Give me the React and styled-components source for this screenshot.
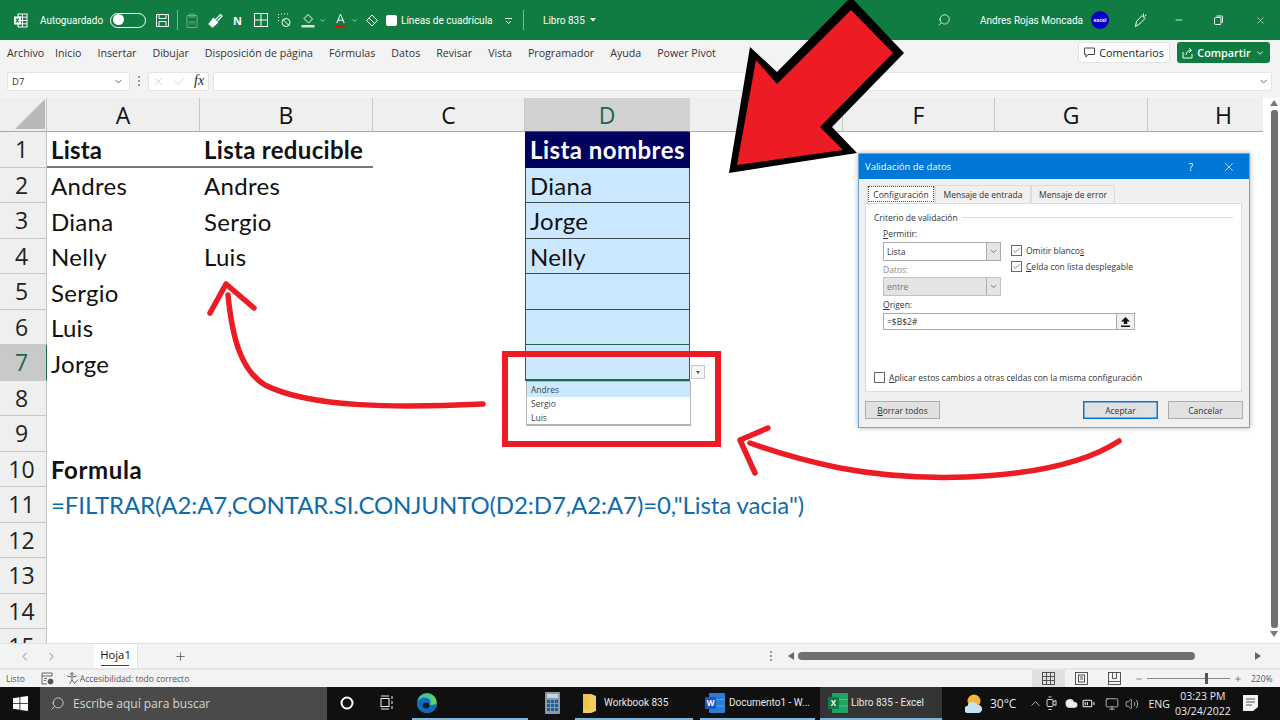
import React from "react";
import styled, { createGlobalStyle } from "styled-components";
import {
  ChevronDown,
  ChevronUp,
  ChevronLeft,
  ChevronRight,
  Cloud,
  BatteryMedium,
  Monitor,
  Volume2,
  Search,
  Plus,
  X,
  Check,
  Minus,
} from "lucide-react";

const GlobalStyle = createGlobalStyle`
  html, body { margin: 0; padding: 0; background: #fff; }
  body { width: 1280px; height: 720px; overflow: hidden; font-family: "Open Sans", "Liberation Sans", sans-serif; }
  * { box-sizing: border-box; }
`;

const Page = styled.div`
  position: relative;
  width: 1280px;
  height: 720px;
  display: flex;
  flex-direction: column;
  overflow: hidden;
`;

/* title bar */
const TitleBar = styled.div`
  height: 40px;
  background: #107c41;
  color: #fff;
  display: flex;
  align-items: center;
  padding: 0 14px 0 13px;
  flex: none;
`;

const Slot = styled.span`
  display: flex;
  align-items: center;
  justify-content: ${(p) => (p.$start ? "flex-start" : "center")};
  flex: none;
  margin-left: ${(p) => p.$ml || 0}px;
  width: ${(p) => (p.$w ? `${p.$w}px` : "auto")};
  font-size: ${(p) => (p.$fs ? `${p.$fs}px` : "inherit")};
`;

const TitleText = styled.span`
  flex: none;
  font-family: "Roboto", "Open Sans", sans-serif;
  font-size: 10px;
  white-space: nowrap;
  margin-left: ${(p) => p.$ml || 0}px;
  width: ${(p) => p.$w}px;
`;

const Toggle = styled.span`
  flex: none;
  width: 36px;
  height: 15px;
  margin-left: 6px;
  border: 1.5px solid #fff;
  border-radius: 8px;
  position: relative;
  &::after {
    content: "";
    position: absolute;
    left: 2px;
    top: 0.5px;
    width: 11px;
    height: 11px;
    border-radius: 50%;
    background: #fff;
  }
`;

const TitleSep = styled.span`
  flex: none;
  width: 1px;
  height: 20px;
  background: #7db896;
  margin-left: ${(p) => p.$ml}px;
`;

const WhiteCheck = styled.span`
  flex: none;
  width: 11px;
  height: 11px;
  margin-left: 8px;
  border-radius: 2px;
  background: #fff;
`;

const NLetter = styled.span`
  flex: none;
  width: 9px;
  margin-left: 10px;
  font-size: 11px;
  font-weight: 700;
`;

const Avatar = styled.span`
  flex: none;
  width: 18px;
  height: 18px;
  margin-left: 10px;
  border-radius: 50%;
  background: #0000c8;
  color: #fff;
  font-size: 5px;
  font-weight: 700;
  display: flex;
  align-items: center;
  justify-content: center;
`;

const Spacer = styled.span`
  flex: 1;
`;

/* menu row */
const MenuRow = styled.div`
  height: 25px;
  flex: none;
  background: #f3f3f3;
  display: flex;
  align-items: center;
  padding: 0 10px 0 7px;
  gap: 16px;
`;

const MenuItem = styled.span`
  font-size: 10.65px;
  color: #333;
  white-space: nowrap;
  &:first-child {
    margin-right: -5px;
  }
`;

const CommentButton = styled.span`
  width: 92px;
  height: 21px;
  background: #fff;
  border: 1px solid #e2e2e2;
  border-radius: 3px;
  display: flex;
  align-items: center;
  justify-content: center;
  gap: 4px;
  font-size: 10.8px;
  color: #222;
  margin-left: auto;
`;

const ShareButton = styled.span`
  width: 93px;
  height: 21px;
  margin-left: -9px;
  background: #107c41;
  color: #fff;
  border-radius: 3px;
  display: flex;
  align-items: center;
  justify-content: center;
  gap: 4px;
  font-size: 10.8px;
  font-weight: 600;
`;

/* formula row */
const FormulaRow = styled.div`
  height: 33px;
  flex: none;
  background: #f3f3f3;
  display: flex;
  align-items: center;
  padding: 0 8px 1px 7px;
`;

const NameBox = styled.div`
  width: 123px;
  height: 19px;
  background: #fff;
  border: 1px solid #e4e4e4;
  border-radius: 2px;
  display: flex;
  align-items: center;
  justify-content: space-between;
  padding: 0 5px 0 4px;
  font-size: 9.5px;
  color: #333;
`;

const GripDots = styled.span`
  width: 2px;
  height: 10px;
  margin: 0 8px 0 8px;
  background: repeating-linear-gradient(#999 0 2px, transparent 2px 4px);
  flex: none;
`;

const FormulaButtons = styled.div`
  width: 61px;
  height: 19px;
  background: #fff;
  border: 1px solid #e4e4e4;
  border-radius: 2px;
  display: flex;
  align-items: center;
  gap: 8px;
  padding-left: 3px;
  flex: none;
`;

const FxLabel = styled.span`
  font-family: "Liberation Serif", serif;
  font-style: italic;
  font-size: 14px;
  color: #222;
`;

const FormulaInput = styled.div`
  flex: 1;
  height: 19px;
  margin-left: 4px;
  background: #fff;
  border: 1px solid #e4e4e4;
  border-radius: 2px;
  display: flex;
  align-items: center;
  justify-content: flex-end;
  padding-right: 2px;
`;

/* sheet */
const SheetArea = styled.div`
  height: 545px;
  flex: none;
  display: flex;
  background: #fff;
`;

const SheetGrid = styled.div`
  width: 1263px;
  overflow: hidden;
  display: grid;
  grid-template-columns: 47px 153px 173px 152px 165px 153px 152px 153px 152px;
  grid-template-rows: 34px repeat(15, 35.5px);
`;

const Corner = styled.div`
  background: #efefef;
  border-right: 1px solid #c4c4c4;
  border-bottom: 1px solid #a8a8a8;
  display: flex;
  align-items: flex-end;
  justify-content: flex-end;
  padding: 0 1px 2px 0;
`;

const ColHead = styled.div`
  background: ${(p) => (p.$on ? "#d2d2d2" : "#efefef")};
  color: ${(p) => (p.$on ? "#1d6b45" : "#111")};
  border-right: 1px solid ${(p) => (p.$on ? "#d2d2d2" : "#c8c8c8")};
  border-bottom: 1px solid ${(p) => (p.$on ? "#1d6b45" : "#a8a8a8")};
  font-size: 23px;
  display: flex;
  align-items: center;
  justify-content: center;
`;

const RowHead = styled.div`
  background: ${(p) => (p.$on ? "#c9c9c9" : "#efefef")};
  color: ${(p) => (p.$on ? "#1d6b45" : "#222")};
  border-right: ${(p) => (p.$on ? "1px solid #1d6b45" : "1px solid #c4c4c4")};
  border-bottom: 1px solid #c8c8c8;
  font-size: 23px;
  display: flex;
  align-items: center;
  justify-content: center;
  padding-right: 3px;
`;

const Cell = styled.div`
  font-family: "Lato", "Carlito", "Liberation Sans", sans-serif;
  font-size: 24px;
  color: #111;
  padding: 1px 0 0 4px;
  white-space: nowrap;
  display: flex;
  align-items: center;
  font-weight: ${(p) => (p.$bold ? 700 : 400)};
  letter-spacing: ${(p) => p.$ls ?? (p.$bold ? 0.3 : 0.3)}px;
  ${(p) => p.$rule && "border-bottom: 2px solid #777;"}
`;

const FormulaCell = styled(Cell)`
  color: #0f6cab;
  padding-top: 0;
  letter-spacing: -0.1px;
`;

const NamesHead = styled(Cell)`
  background: #00005f;
  color: #fff;
  font-weight: 700;
  padding: 0 0 0 5px;
  letter-spacing: 0.45px;
`;

const NameCell = styled(Cell)`
  background: #cce8ff;
  padding-left: 4px;
  border-left: 1px solid #3c4a52;
  border-right: 1px solid #3c4a52;
  border-bottom: 1px solid #3c4a52;
  ${(p) =>
    p.$selected &&
    "border: 1px solid #1d6b45; border-bottom: 2px solid #1d6b45; margin-top: -1px; position: relative;"}
`;

const VScroll = styled.div`
  width: 17px;
  background: #fff;
  display: flex;
  flex-direction: column;
  align-items: center;
  padding: 2px 0 0 5px;
`;

const VThumb = styled.div`
  width: 7px;
  height: 518px;
  margin: 4px 0 3px;
  background: #707070;
  border-radius: 3px;
`;

const Arrowhead = styled.span`
  width: 0;
  height: 0;
  border-left: 4px solid transparent;
  border-right: 4px solid transparent;
  ${(p) => (p.$down ? "border-top: 6px solid #777;" : "border-bottom: 6px solid #777;")}
`;

/* sheet tabs */
const TabsRow = styled.div`
  height: 25px;
  flex: none;
  background: #f3f3f3;
  border-top: 1px solid #e0e0e0;
  display: flex;
  align-items: center;
  padding-left: 18px;
`;

const SheetTab = styled.div`
  width: 44px;
  height: 100%;
  margin-left: 36px;
  background: #fff;
  border-right: 1px solid #e0e0e0;
  display: flex;
  align-items: center;
  justify-content: center;
  font-size: 11.3px;
  color: #111;
  position: relative;
  padding-bottom: 3px;
  &::after {
    content: "";
    position: absolute;
    left: 7px;
    right: 8px;
    bottom: 2px;
    height: 1.5px;
    background: #185c37;
  }
`;

const HScrollTrack = styled.div`
  margin-left: auto;
  display: flex;
  align-items: center;
  padding-right: 19px;
`;

const HThumb = styled.div`
  width: 397px;
  height: 8px;
  margin: 0 60px 0 4px;
  background: #707070;
  border-radius: 4px;
`;

const HArrow = styled.span`
  width: 0;
  height: 0;
  border-top: 4px solid transparent;
  border-bottom: 4px solid transparent;
  ${(p) => (p.$right ? "border-left: 6px solid #666;" : "border-right: 6px solid #666;")}
`;

/* status bar */
const StatusBar = styled.div`
  height: 19px;
  flex: none;
  background: #f3f3f3;
  border-top: 2px solid #e6e6e6;
  display: flex;
  align-items: center;
  padding-left: 6px;
  font-size: 8.5px;
  color: #555;
`;

const ViewButton = styled.span`
  width: 33px;
  height: 100%;
  display: flex;
  align-items: center;
  justify-content: center;
  background: ${(p) => (p.$on ? "#e0e0e0" : "transparent")};
`;

const ZoomTrack = styled.span`
  width: 83px;
  height: 1px;
  margin: 0 4px 0 4px;
  background: #888;
  position: relative;
`;

const ZoomThumb = styled.span`
  position: absolute;
  left: 58px;
  top: -5px;
  width: 3px;
  height: 11px;
  background: #555;
`;

/* task bar */
const TaskBar = styled.div`
  height: 33px;
  flex: none;
  background: #101010;
  color: #e8e8e8;
  display: flex;
  align-items: stretch;
`;

const StartBox = styled.div`
  width: 40px;
  flex: none;
  display: flex;
  align-items: center;
  justify-content: center;
`;

const SearchBox = styled.div`
  width: 287px;
  flex: none;
  background: #4a4a4a;
  display: flex;
  align-items: center;
  gap: 8px;
  padding-left: 10px;
  font-size: 12px;
  color: #d6d6d6;
`;

const TaskItem = styled.div`
  width: ${(p) => p.$w}px;
  margin-left: ${(p) => p.$ml || 0}px;
  padding-left: ${(p) => p.$pl || 0}px;
  display: flex;
  align-items: center;
  justify-content: ${(p) => (p.$center ? "center" : "flex-start")};
  gap: ${(p) => p.$gap || 0}px;
  flex: none;
  font-family: "Roboto", "Open Sans", sans-serif;
  font-size: 10px;
  white-space: nowrap;
  background: ${(p) => (p.$active ? "#343434" : "transparent")};
  border-bottom: 2px solid ${(p) => (p.$open ? "#7fb4dd" : "transparent")};
`;

const Tray = styled.div`
  display: flex;
  align-items: center;
  flex: none;
  margin-left: 23px;
  font-size: 10.5px;
`;

const Clock = styled.div`
  width: 66px;
  text-align: center;
  font-size: 10.5px;
  line-height: 15px;
`;

/* dialog */
const DialogWin = styled.div`
  position: absolute;
  left: 858px;
  top: 153px;
  width: 392px;
  height: 275px;
  background: #f0f0f0;
  border: 1px solid #6fa6d6;
  box-shadow: 0 0 5px rgba(0, 0, 0, 0.3);
  color: #333;
  font-size: 8.5px;
  display: flex;
  flex-direction: column;
`;

const DialogTitle = styled.div`
  height: 25px;
  background: #0078d7;
  color: #fff;
  font-size: 9.5px;
  display: flex;
  align-items: center;
  padding: 0 13px 0 6px;
  flex: none;
`;

const DialogHelp = styled.span`
  margin-left: auto;
  margin-right: 29px;
  font-size: 10px;
`;

const DialogTabs = styled.div`
  display: flex;
  height: 18px;
  margin: 6px 0 0 8px;
  flex: none;
`;

const DialogTab = styled.div`
  width: ${(p) => p.$w}px;
  background: ${(p) => (p.$on ? "#fff" : "#f0f0f0")};
  border: 1px solid #dcdcdc;
  border-bottom: none;
  display: flex;
  align-items: center;
  justify-content: center;
  ${(p) => p.$on && "outline: 1px dotted #555; outline-offset: -2px;"}
`;

const DialogPanel = styled.div`
  height: 189px;
  margin: 0 7px 0 6px;
  background: #fff;
  border: 1px solid #dcdcdc;
  padding: 7px 8px 0 8px;
  flex: none;
`;

const Legend = styled.div`
  display: flex;
  align-items: center;
  gap: 4px;
  height: 12px;
  &::after {
    content: "";
    flex: 1;
    height: 1px;
    background: #dcdcdc;
  }
`;

const FieldsRow = styled.div`
  display: flex;
  margin-left: 9px;
`;

const FieldColumn = styled.div`
  width: 118px;
  flex: none;
`;

const ChecksColumn = styled.div`
  margin: 22px 0 0 10px;
  display: flex;
  flex-direction: column;
  gap: 5px;
`;

const FieldLabel = styled.div`
  height: 12px;
  line-height: 12px;
  margin-top: ${(p) => p.$mt}px;
  margin-left: ${(p) => p.$ml || 0}px;
  color: ${(p) => (p.$off ? "#8a8a8a" : "#333")};
`;

const SelectBox = styled.div`
  height: 19px;
  margin-top: ${(p) => p.$mt}px;
  background: ${(p) => (p.$off ? "#e4e4e4" : "#fff")};
  color: ${(p) => (p.$off ? "#777" : "#333")};
  border: 1px solid ${(p) => (p.$off ? "#c2c2c2" : "#ababab")};
  display: flex;
  align-items: center;
  justify-content: space-between;
  padding-left: 3px;
`;

const SelectArrow = styled.span`
  width: 14px;
  height: 100%;
  background: #e4e4e4;
  border-left: 1px solid #ababab;
  display: flex;
  align-items: center;
  justify-content: center;
`;

const CheckLine = styled.label`
  display: flex;
  align-items: center;
  gap: 4px;
  height: 11px;
`;

const CheckBox = styled.span`
  width: 11px;
  height: 11px;
  flex: none;
  background: #fff;
  border: 1px solid #666;
  display: flex;
  align-items: center;
  justify-content: center;
`;

const SourceInput = styled.div`
  width: 252px;
  height: 17px;
  margin: 2px 0 0 9px;
  border: 1px solid #ababab;
  display: flex;
  align-items: center;
  justify-content: space-between;
  padding-left: 3px;
`;

const SourceButton = styled.span`
  width: 18px;
  height: 100%;
  background: #f0f0f0;
  border-left: 1px solid #ababab;
  display: flex;
  align-items: center;
  justify-content: center;
`;

const ApplyLine = styled(CheckLine)`
  margin-top: 42px;
`;

const DialogFooter = styled.div`
  display: flex;
  margin: 9px 6px 0 6px;
  gap: 10px;
`;

const DialogButton = styled.div`
  width: 75px;
  height: 18px;
  background: #e1e1e1;
  border: 1px solid ${(p) => (p.$main ? "#0078d7" : "#adadad")};
  ${(p) => p.$main && "box-shadow: inset 0 0 0 0.5px #0078d7;"}
  ${(p) => p.$push && "margin-left: auto;"}
  display: flex;
  align-items: center;
  justify-content: center;
`;

/* validation list */
const DropButton = styled.div`
  position: absolute;
  left: 691px;
  top: 365px;
  width: 14px;
  height: 14px;
  background: #f4f4f4;
  border: 1px solid #c8c8c8;
  display: flex;
  align-items: center;
  justify-content: center;
  &::after {
    content: "";
    border-left: 2.5px solid transparent;
    border-right: 2.5px solid transparent;
    border-top: 3px solid #555;
  }
`;

const DropList = styled.div`
  position: absolute;
  left: 526px;
  top: 381px;
  width: 165px;
  height: 45px;
  background: #fff;
  border: 1px solid #b5b5b5;
  border-bottom-width: 2px;
`;

const DropItem = styled.div`
  height: ${(p) => (p.$on ? 15 : 14)}px;
  line-height: ${(p) => (p.$on ? 16 : 14)}px;
  padding-left: 4px;
  font-size: 8.5px;
  color: #444;
  background: ${(p) => (p.$on ? "#cce8ff" : "transparent")};
`;

const RedFrame = styled.div`
  position: absolute;
  left: 502px;
  top: 351px;
  width: 219px;
  height: 96px;
  border: 6px solid #ed1c24;
`;

const OverlayArt = styled.svg`
  position: absolute;
  left: 0;
  top: 0;
  width: 1280px;
  height: 720px;
  pointer-events: none;
`;

/* drawn icons */
const ExcelLogo = () => (
  <svg width="15" height="15" viewBox="0 0 15 15" fill="none" stroke="#fff" strokeWidth="1">
    <rect x="5" y="1" width="9" height="13" />
    <path d="M5 4.2h9M5 7.5h9M5 10.8h9M9.5 1v13" />
    <rect x="1" y="3.5" width="7" height="8" fill="#fff" stroke="none" />
    <path d="M2.8 5.4l3.2 4.2M6 5.4L2.8 9.6" stroke="#107c41" strokeWidth="1.1" />
  </svg>
);

const SaveIcon = () => (
  <svg width="15" height="15" viewBox="0 0 15 15" fill="none" stroke="#fff" strokeWidth="1">
    <path d="M1.5 1.5h12v12h-12z" />
    <path d="M4 1.5v4h7v-4M4 13.5v-5h7v5" />
  </svg>
);

const ClipboardIcon = () => (
  <svg width="12" height="15" viewBox="0 0 12 15" fill="none" stroke="#6fae8c" strokeWidth="1">
    <path d="M1 2.5h10v12H1zM3.5 1h5v3h-5z" />
    <path d="M3 11h1M5.5 11h1M8 11h1M3 9h6" />
  </svg>
);

const BrushIcon = () => (
  <svg width="15" height="15" viewBox="0 0 15 15" fill="none" stroke="#fff" strokeWidth="1.2">
    <path d="M1 11l4.5-5.5 4 4L4.5 14z" fill="#fff" />
    <path d="M7.5 6.5l5-5 1.5 1.5-4.5 5" />
  </svg>
);

const BordersIcon = () => (
  <svg width="14" height="14" viewBox="0 0 14 14" fill="none" stroke="#fff" strokeWidth="1">
    <rect x="0.5" y="0.5" width="13" height="13" />
    <path d="M7 .5v13M.5 7h13" />
  </svg>
);

const NoBorderIcon = () => (
  <svg width="13" height="15" viewBox="0 0 13 15" fill="none" stroke="#fff" strokeWidth="1">
    <path d="M.5 1v9" strokeDasharray="1 2" />
    <path d="M3 1h8" strokeDasharray="1 2" />
    <circle cx="8" cy="9.5" r="4" />
    <path d="M5.2 6.7l5.6 5.6" />
  </svg>
);

const FillIcon = () => (
  <svg width="14" height="15" viewBox="0 0 14 15" fill="none" stroke="#fff" strokeWidth="1">
    <path d="M7 1.5l4.5 4.5-4 4-4.500-4.500z" />
    <rect x="0.5" y="12" width="13" height="2.5" fill="#cfe8d8" stroke="none" />
  </svg>
);

const EraserIcon = () => (
  <svg width="12" height="13" viewBox="0 0 12 13" fill="none" stroke="#fff" strokeWidth="1">
    <path d="M6 1l5.3 5.5L6 12 .7 6.5z" />
    <path d="M3 4l5.5 5.5" />
  </svg>
);

const FontColorIcon = () => (
  <svg width="11" height="15" viewBox="0 0 11 15" fill="none">
    <path d="M1.8 10L5.5 1l3.700 9M3 7.200h5" stroke="#fff" strokeWidth="1" />
    <rect x="0" y="12" width="11" height="2.5" fill="#e01010" />
  </svg>
);

const PenIcon = () => (
  <svg width="14" height="16" viewBox="0 0 14 16" fill="none" stroke="#fff" strokeWidth="1">
    <path d="M1.5 14.5l1-5L8 3.5l3 3-5.500 5.500z" />
    <path d="M9.5 1.5v3M12.5 2.5l-2 2" />
  </svg>
);

const RestoreIcon = () => (
  <svg width="9" height="10" viewBox="0 0 9 10" fill="none" stroke="#fff" strokeWidth="1">
    <rect x="0.5" y="2.5" width="6.5" height="7" rx="1" />
    <path d="M2.5 1h5.2a.8.8 0 0 1 .8.8V7.5" />
  </svg>
);

const Caret = () => (
  <svg width="6" height="4" viewBox="0 0 6 4">
    <path d="M0 0h6L3 3.5z" fill="#fff" />
  </svg>
);

const QatMore = () => (
  <svg width="7" height="7" viewBox="0 0 7 7" fill="none" stroke="#fff">
    <path d="M0 1.5h7" />
    <path d="M1 4l2.5 2.5L6 4" />
  </svg>
);

const CommentIcon = () => (
  <svg width="11" height="11" viewBox="0 0 11 11" fill="none" stroke="#333" strokeWidth="0.9">
    <path d="M.5 1h10v6.5H4L2 10V7.5H.5z" />
  </svg>
);

const ShareIcon = () => (
  <svg width="11" height="12" viewBox="0 0 11 12" fill="none" stroke="#fff" strokeWidth="1">
    <path d="M1 5v6h9V7M4 8c0-3 2-4.500 5-4.500M7 1l2.500 2.500L7 6" />
  </svg>
);

const CornerTriangle = () => (
  <svg width="30" height="30" viewBox="0 0 30 30">
    <path d="M30 0v30H0z" fill="#b8b8b8" />
  </svg>
);

const MacroIcon = () => (
  <svg width="13" height="13" viewBox="0 0 13 13" fill="none" stroke="#555" strokeWidth="0.9">
    <path d="M1 1h10v3H1zM1 4v8h5M3 6.500h3M3 8.500h2" />
    <circle cx="9.500" cy="9.500" r="2.500" fill="#555" />
  </svg>
);

const AccessIcon = () => (
  <svg width="13" height="13" viewBox="0 0 13 13" fill="none" stroke="#555" strokeWidth="0.9">
    <circle cx="6" cy="2" r="1.300" />
    <path d="M1 4l5 1 5-1M6 5v3L3.500 12M6 8l1.500 2 1 1.500 3.500-4" />
  </svg>
);

const GridViewIcon = () => (
  <svg width="13" height="13" viewBox="0 0 13 13" fill="none" stroke="#444" strokeWidth="0.9">
    <rect x="0.500" y="0.500" width="12" height="12" />
    <path d="M4.500.5v12M8.500.5v12M.5 4.500h12M.5 8.500h12" />
  </svg>
);

const PageViewIcon = () => (
  <svg width="13" height="13" viewBox="0 0 13 13" fill="none" stroke="#444" strokeWidth="0.9">
    <rect x="0.500" y="0.500" width="12" height="12" />
    <rect x="3.500" y="3" width="6" height="7" />
    <path d="M5 5h3M5 7h3" />
  </svg>
);

const BreakViewIcon = () => (
  <svg width="13" height="13" viewBox="0 0 13 13" fill="none" stroke="#444" strokeWidth="0.9">
    <rect x="0.500" y="0.500" width="12" height="12" />
    <path d="M4.500.5v6h4v-6M.5 9.500h12" />
  </svg>
);

const WindowsLogo = () => (
  <svg width="15" height="15" viewBox="0 0 15 15" fill="#fff">
    <path d="M0 2.200L6.500 1.200V7H0zM7.300 1.100L15 0v7H7.300zM0 7.800h6.500v6L0 12.800zM7.300 7.800H15V15l-7.700-1.100z" />
  </svg>
);

const TaskViewIcon = () => (
  <svg width="14" height="15" viewBox="0 0 14 15" fill="none" stroke="#eee" strokeWidth="1">
    <rect x="1" y="3.500" width="8" height="8" />
    <path d="M1 1h8M1 14h8M12 1v3M12 6v3M12 11v3" />
  </svg>
);

const CortanaRing = () => (
  <svg width="14" height="14" viewBox="0 0 14 14" fill="none" stroke="#fff" strokeWidth="2">
    <circle cx="7" cy="7" r="5.500" />
  </svg>
);

const EdgeLogo = () => (
  <svg width="20" height="20" viewBox="0 0 20 20">
    <defs>
      <linearGradient id="edgeA" x1="0" y1="0" x2="1" y2="1">
        <stop offset="0" stopColor="#35c1a0" />
        <stop offset="1" stopColor="#76d65a" />
      </linearGradient>
    </defs>
    <circle cx="10" cy="10" r="10" fill="url(#edgeA)" />
    <path d="M0 10c1-4 6-6 10-5 4 1 5 5 2 6.500 3 1 6 .5 8-1.500 0 6-5 10-10 10S0 16 0 10z" fill="#0f6cc4" />
    <ellipse cx="9" cy="12.500" rx="3.500" ry="3" fill="#101010" opacity="0.85" />
  </svg>
);

const CalcIcon = () => (
  <svg width="15" height="22" viewBox="0 0 15 22">
    <rect width="15" height="22" rx="1" fill="#8a9ba8" />
    <rect x="2" y="2" width="11" height="4" fill="#c9d6df" />
    <path d="M2 8h3v3H2zM6 8h3v3H6zM10 8h3v3h-3zM2 12h3v3H2zM6 12h3v3H6zM10 12h3v3h-3zM2 16h3v3H2zM6 16h3v3H6zM10 16h3v3h-3z" fill="#1f5d9c" />
  </svg>
);

const FolderIcon = () => (
  <svg width="13" height="20" viewBox="0 0 13 20">
    <path d="M0 1h8l5 2v15l-5 2H0z" fill="#f3cf62" />
    <path d="M0 1h6v15H0z" fill="#e6b73c" opacity="0.5" />
  </svg>
);

const OfficeTile = ({ back, front, letter }) => (
  <svg width="20" height="20" viewBox="0 0 20 20">
    <rect x="4" y="0" width="16" height="20" rx="1" fill={back} />
    <path d="M4 6.500h16M4 13h16" stroke="#ffffff" strokeOpacity="0.25" />
    <rect x="0" y="4" width="11" height="12" rx="1" fill={front} />
    <text x="5.500" y="13" textAnchor="middle" fontSize="8" fontWeight="700" fill="#fff" fontFamily="Open Sans, sans-serif">
      {letter}
    </text>
  </svg>
);

const WeatherIcon = () => (
  <svg width="18" height="20" viewBox="0 0 18 20">
    <circle cx="9" cy="7" r="6.500" fill="#f4b63c" />
    <path d="M3 19a3.500 3.500 0 0 1-.5-7 5 5 0 0 1 9.500-1 4 4 0 0 1 2 8z" fill="#c6e2f5" />
  </svg>
);

const MeetIcon = () => (
  <svg width="11" height="15" viewBox="0 0 11 15" fill="none" stroke="#eee" strokeWidth="0.9">
    <rect x="1" y="3.500" width="6" height="7" rx="1" />
    <path d="M7 6l3-1.500v5L7 8M2.500 1h3M2.500 13.500h3" />
  </svg>
);

const NotifyIcon = () => (
  <svg width="16" height="17" viewBox="0 0 16 17">
    <path d="M0 0h15v12l-5 4H0z" fill="#f2f2f2" />
    <path d="M3 4h9M3 7h9M3 10h6" stroke="#555" />
  </svg>
);

const UploadMark = () => (
  <svg width="9" height="10" viewBox="0 0 9 10" fill="#111">
    <path d="M4.500 0L9 4.500H6.200V7H2.800V4.500H0zM0 8.500h9V10H0z" />
  </svg>
);

const columns = ["A", "B", "C", "D", "E", "F", "G", "H"];

const names = ["Andres", "Diana", "Nelly", "Sergio", "Luis", "Jorge"];
const reducible = ["Andres", "Sergio", "Luis"];
const picked = ["Diana", "Jorge", "Nelly", "", "", ""];

const renderRow = (row) => {
  const cells = [];
  const idx = row - 2;
  for (let c = 0; c < 8; c++) {
    const key = `${row}-${c}`;
    if (row === 1 && c === 0) cells.push(<Cell key={key} $bold $rule $ls={0.2}>Lista</Cell>);
    else if (row === 1 && c === 1) cells.push(<Cell key={key} $bold $rule>Lista reducible</Cell>);
    else if (row === 1 && c === 3) cells.push(<NamesHead key={key}>Lista nombres</NamesHead>);
    else if (row === 10 && c === 0) cells.push(<Cell key={key} $bold $ls={0.6}>Formula</Cell>);
    else if (row === 11 && c === 0)
      cells.push(<FormulaCell key={key}>=FILTRAR(A2:A7,CONTAR.SI.CONJUNTO(D2:D7,A2:A7)=0,"Lista vacia")</FormulaCell>);
    else if (c === 0 && names[idx]) cells.push(<Cell key={key}>{names[idx]}</Cell>);
    else if (c === 1 && reducible[idx]) cells.push(<Cell key={key}>{reducible[idx]}</Cell>);
    else if (c === 3 && row >= 2 && row <= 7)
      cells.push(<NameCell key={key} $selected={row === 7}>{picked[idx]}</NameCell>);
    else cells.push(<Cell key={key} />);
  }
  return cells;
};

const menuItems = [
  "Archivo", "Inicio", "Insertar", "Dibujar", "Disposición de página", "Fórmulas",
  "Datos", "Revisar", "Vista", "Programador", "Ayuda", "Power Pivot",
];

const App = () => (
  <Page>
    <GlobalStyle />

    <TitleBar>
      <ExcelLogo />
      <TitleText $ml={12} $w={64}>Autoguardado</TitleText>
      <Toggle />
      <Slot $ml={9} $w={15}><SaveIcon /></Slot>
      <TitleSep $ml={7} />
      <Slot $ml={8} $w={12}><ClipboardIcon /></Slot>
      <Slot $ml={10} $w={15}><BrushIcon /></Slot>
      <NLetter>N</NLetter>
      <Slot $ml={12} $w={14}><BordersIcon /></Slot>
      <Slot $ml={10} $w={13}><NoBorderIcon /></Slot>
      <Slot $ml={10} $w={14}><FillIcon /></Slot>
      <Slot $ml={4} $w={7}><ChevronDown size={7} color="#fff" /></Slot>
      <Slot $ml={9} $w={11}><FontColorIcon /></Slot>
      <Slot $ml={5} $w={7}><ChevronDown size={7} color="#fff" /></Slot>
      <Slot $ml={8} $w={12}><EraserIcon /></Slot>
      <WhiteCheck />
      <TitleText $ml={4} $w={89}>Líneas de cuadrícula</TitleText>
      <Slot $ml={15} $w={7}><QatMore /></Slot>
      <TitleSep $ml={11} />
      <TitleText $ml={19} $w={42}>Libro 835</TitleText>
      <Slot $ml={5} $w={6}><Caret /></Slot>
      <Spacer />
      <Slot $w={14}><Search size={14} color="#fff" strokeWidth={1.3} style={{ transform: "scaleX(-1)" }} /></Slot>
      <TitleText $ml={29} $w={101}>Andres Rojas Moncada</TitleText>
      <Avatar>excel</Avatar>
      <Slot $ml={25} $w={14}><PenIcon /></Slot>
      <Slot $ml={26} $w={10}><Minus size={10} color="#fff" /></Slot>
      <Slot $ml={30} $w={9}><RestoreIcon /></Slot>
      <Slot $ml={32} $w={11}><X size={13} color="#fff" strokeWidth={1.2} /></Slot>
    </TitleBar>

    <MenuRow>
      {menuItems.map((m) => (
        <MenuItem key={m}>{m}</MenuItem>
      ))}
      <CommentButton><CommentIcon />Comentarios</CommentButton>
      <ShareButton><ShareIcon />Compartir<ChevronDown size={10} color="#fff" /></ShareButton>
    </MenuRow>

    <FormulaRow>
      <NameBox>D7<ChevronDown size={11} color="#555" /></NameBox>
      <GripDots />
      <FormulaButtons>
        <X size={13} color="#bbb" strokeWidth={1.1} />
        <Check size={13} color="#bbb" strokeWidth={1.1} />
        <FxLabel>fx</FxLabel>
      </FormulaButtons>
      <FormulaInput><ChevronDown size={11} color="#555" /></FormulaInput>
    </FormulaRow>

    <SheetArea>
      <SheetGrid>
        <Corner><CornerTriangle /></Corner>
        {columns.map((c) => (
          <ColHead key={c} $on={c === "D"}>{c}</ColHead>
        ))}
        {Array.from({ length: 15 }, (_, i) => i + 1).map((row) => (
          <React.Fragment key={row}>
            <RowHead $on={row === 7}>{row}</RowHead>
            {renderRow(row)}
          </React.Fragment>
        ))}
      </SheetGrid>
      <VScroll>
        <Arrowhead />
        <VThumb />
        <Arrowhead $down />
      </VScroll>
    </SheetArea>

    <TabsRow>
      <ChevronLeft size={13} color="#b5b5b5" />
      <Slot $ml={14}><ChevronRight size={13} color="#b5b5b5" /></Slot>
      <SheetTab>Hoja1</SheetTab>
      <Slot $ml={36}><Plus size={13} color="#333" strokeWidth={1.2} /></Slot>
      <HScrollTrack>
        <GripDots />
        <Slot $ml={8}><HArrow /></Slot>
        <HThumb />
        <HArrow $right />
      </HScrollTrack>
    </TabsRow>

    <StatusBar>
      Listo
      <Slot $ml={16}><MacroIcon /></Slot>
      <Slot $ml={12}><AccessIcon /></Slot>
      <Slot $ml={1}>Accesibilidad: todo correcto</Slot>
      <Spacer />
      <ViewButton $on><GridViewIcon /></ViewButton>
      <ViewButton><PageViewIcon /></ViewButton>
      <ViewButton><BreakViewIcon /></ViewButton>
      <Slot $ml={4}><Minus size={8} color="#555" /></Slot>
      <ZoomTrack><ZoomThumb /></ZoomTrack>
      <Slot><Plus size={8} color="#555" /></Slot>
      <Slot $ml={9} $w={29} $start>220%</Slot>
    </StatusBar>

    <TaskBar>
      <StartBox><WindowsLogo /></StartBox>
      <SearchBox>
        <Search size={15} color="#ddd" strokeWidth={1.3} style={{ transform: "scaleX(-1)" }} />
        Escribe aquí para buscar
      </SearchBox>
      <TaskItem $w={40} $center><CortanaRing /></TaskItem>
      <TaskItem $w={40} $center><TaskViewIcon /></TaskItem>
      <TaskItem $w={116} $ml={5} $pl={5} $open><EdgeLogo /></TaskItem>
      <TaskItem $w={47} $pl={17}><CalcIcon /></TaskItem>
      <TaskItem $w={118} $pl={8} $gap={8} $open><FolderIcon />Workbook 835</TaskItem>
      <TaskItem $w={115} $ml={7} $pl={5} $gap={4} $open>
        <OfficeTile back="#2b7cd3" front="#185abd" letter="W" />Documento1 - W...
      </TaskItem>
      <TaskItem $w={122} $ml={5} $pl={8} $gap={3} $active $open>
        <OfficeTile back="#21a366" front="#107c41" letter="X" />Libro 835 - Excel
      </TaskItem>
      <Tray>
        <WeatherIcon />
        <Slot $ml={7} $fs={12}>30°C</Slot>
        <Slot $ml={12}><ChevronUp size={15} color="#eee" strokeWidth={1.2} /></Slot>
        <Slot $ml={3}><MeetIcon /></Slot>
        <Slot $ml={8}><Cloud size={13} color="#eee" fill="#eee" /></Slot>
        <Slot $ml={4}><BatteryMedium size={13} color="#eee" /></Slot>
        <Slot $ml={10}><Monitor size={14} color="#eee" strokeWidth={1.2} /></Slot>
        <Slot $ml={6}><Volume2 size={14} color="#eee" strokeWidth={1.2} /></Slot>
        <Slot $ml={9}>ENG</Slot>
        <Clock>03:23 PM<br />03/24/2022</Clock>
        <Slot $ml={7}><NotifyIcon /></Slot>
      </Tray>
    </TaskBar>

    <RedFrame />
    <DropButton />
    <DropList>
      <DropItem $on>Andres</DropItem>
      <DropItem>Sergio</DropItem>
      <DropItem>Luis</DropItem>
    </DropList>

    <DialogWin>
      <DialogTitle>
        Validación de datos
        <DialogHelp>?</DialogHelp>
        <X size={14} color="#fff" strokeWidth={1.2} />
      </DialogTitle>
      <DialogTabs>
        <DialogTab $on $w={68}>Configuración</DialogTab>
        <DialogTab $w={96}>Mensaje de entrada</DialogTab>
        <DialogTab $w={84}>Mensaje de error</DialogTab>
      </DialogTabs>
      <DialogPanel>
        <Legend>Criterio de validación</Legend>
        <FieldsRow>
          <FieldColumn>
            <FieldLabel $mt={5}><u>P</u>ermitir:</FieldLabel>
            <SelectBox $mt={2}>Lista<SelectArrow><ChevronDown size={9} color="#555" /></SelectArrow></SelectBox>
            <FieldLabel $mt={3} $off>Datos:</FieldLabel>
            <SelectBox $mt={1} $off>entre<SelectArrow><ChevronDown size={9} color="#555" /></SelectArrow></SelectBox>
          </FieldColumn>
          <ChecksColumn>
            <CheckLine><CheckBox><Check size={9} color="#333" strokeWidth={1.5} /></CheckBox><span>Omitir blanco<u>s</u></span></CheckLine>
            <CheckLine><CheckBox><Check size={9} color="#333" strokeWidth={1.5} /></CheckBox><span><u>C</u>elda con lista desplegable</span></CheckLine>
          </ChecksColumn>
        </FieldsRow>
        <FieldLabel $mt={3} $ml={9}><u>O</u>rigen:</FieldLabel>
        <SourceInput>=$B$2#<SourceButton><UploadMark /></SourceButton></SourceInput>
        <ApplyLine><CheckBox /><span><u>A</u>plicar estos cambios a otras celdas con la misma configuración</span></ApplyLine>
      </DialogPanel>
      <DialogFooter>
        <DialogButton><span><u>B</u>orrar todos</span></DialogButton>
        <DialogButton $main $push>Aceptar</DialogButton>
        <DialogButton>Cancelar</DialogButton>
      </DialogFooter>
    </DialogWin>

    <OverlayArt viewBox="0 0 1280 720">
      <polygon points="729,173 750,47 777,72 851,-3 904,53 832,127 857,153" fill="#000" />
      <polygon points="737,165 756,60 777,84 851,10 893,53 820,127 843,150" fill="#ed1c24" />
      <g fill="none" stroke="#ed1c24" strokeWidth="5.5" strokeLinecap="round" strokeLinejoin="round">
        <path d="M483 404C400 408 310 408 265 385C240 370 232 335 228 295" />
        <path d="M210 313L226 284L254 308" />
        <path d="M1119 441C1060 480 930 485 840 468C800 460 775 452 750 443" />
        <path d="M768 428L740 440L755 473" />
      </g>
    </OverlayArt>
  </Page>
);

export default App;
